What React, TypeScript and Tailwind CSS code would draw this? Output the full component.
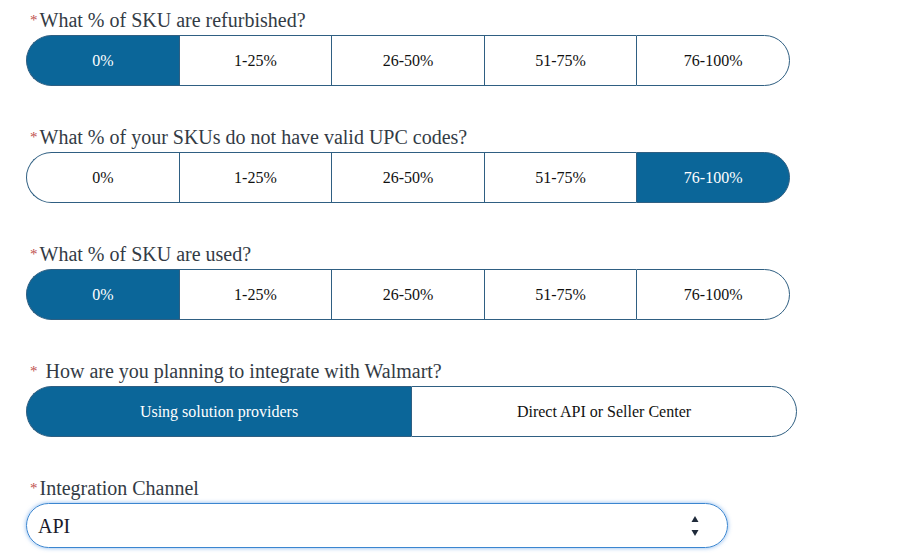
import React from "react";

const pct = ["0%", "1-25%", "26-50%", "51-75%", "76-100%"];

function Label({ text, extraSpace }: { text: string; extraSpace?: boolean }) {
  return (
    <div className="h-[24px] leading-[25px] text-[20px] text-[#333b45] pl-[4px] whitespace-nowrap">
      <span className={`text-[#c0504d] text-[15px] align-top ${extraSpace ? "mr-[8px]" : "mr-[2px]"}`}>*</span>
      {text}
    </div>
  );
}

function Segmented({ options, selected, width }: { options: string[]; selected: number; width: string }) {
  return (
    <div className={`flex h-[51px] mt-[3px] ${width}`}>
      {options.map((o, i) => {
        const first = i === 0;
        const last = i === options.length - 1;
        const sel = i === selected;
        return (
          <div
            key={o}
            className={[
              "flex-1 flex items-center justify-center text-[16px] border-y border-[#2f5f82]",
              first ? "rounded-l-[26px] border-l" : "border-l",
              last ? "rounded-r-[26px] border-r" : "",
              sel ? "bg-[#0b6699] text-white border-[#0b6699]" : "bg-white text-[#111]",
            ].join(" ")}
          >
            {o}
          </div>
        );
      })}
    </div>
  );
}

export default function App() {
  return (
    <div className="w-[915px] h-[560px] bg-white overflow-hidden pl-[26px] pt-[8px] font-['Liberation_Serif']">
      <Label text="What % of SKU are refurbished?" />
      <Segmented options={pct} selected={0} width="w-[764px]" />
      <div className="h-[39px]" />
      <Label text="What % of your SKUs do not have valid UPC codes?" />
      <Segmented options={pct} selected={4} width="w-[764px]" />
      <div className="h-[39px]" />
      <Label text="What % of SKU are used?" />
      <Segmented options={pct} selected={0} width="w-[764px]" />
      <div className="h-[39px]" />
      <Label text="How are you planning to integrate with Walmart?" extraSpace />
      <Segmented options={["Using solution providers", "Direct API or Seller Center"]} selected={0} width="w-[771px]" />
      <div className="h-[39px]" />
      <Label text="Integration Channel" />
      <div className="mt-[3px] w-[702px] h-[45px] rounded-[23px] border border-[#3b86d0] shadow-[0_0_4px_rgba(80,150,230,0.7)] flex items-center pl-[11px] pr-[28px] justify-between">
        <span className="text-[20px] text-[#1a1a2a]">API</span>
        <svg width="8" height="22" viewBox="0 0 8 22">
          <path d="M4 1 L7.5 7 L0.5 7 Z" fill="#1f2a3a" />
          <path d="M4 21 L7.5 15 L0.5 15 Z" fill="#1f2a3a" />
        </svg>
      </div>
    </div>
  );
}
